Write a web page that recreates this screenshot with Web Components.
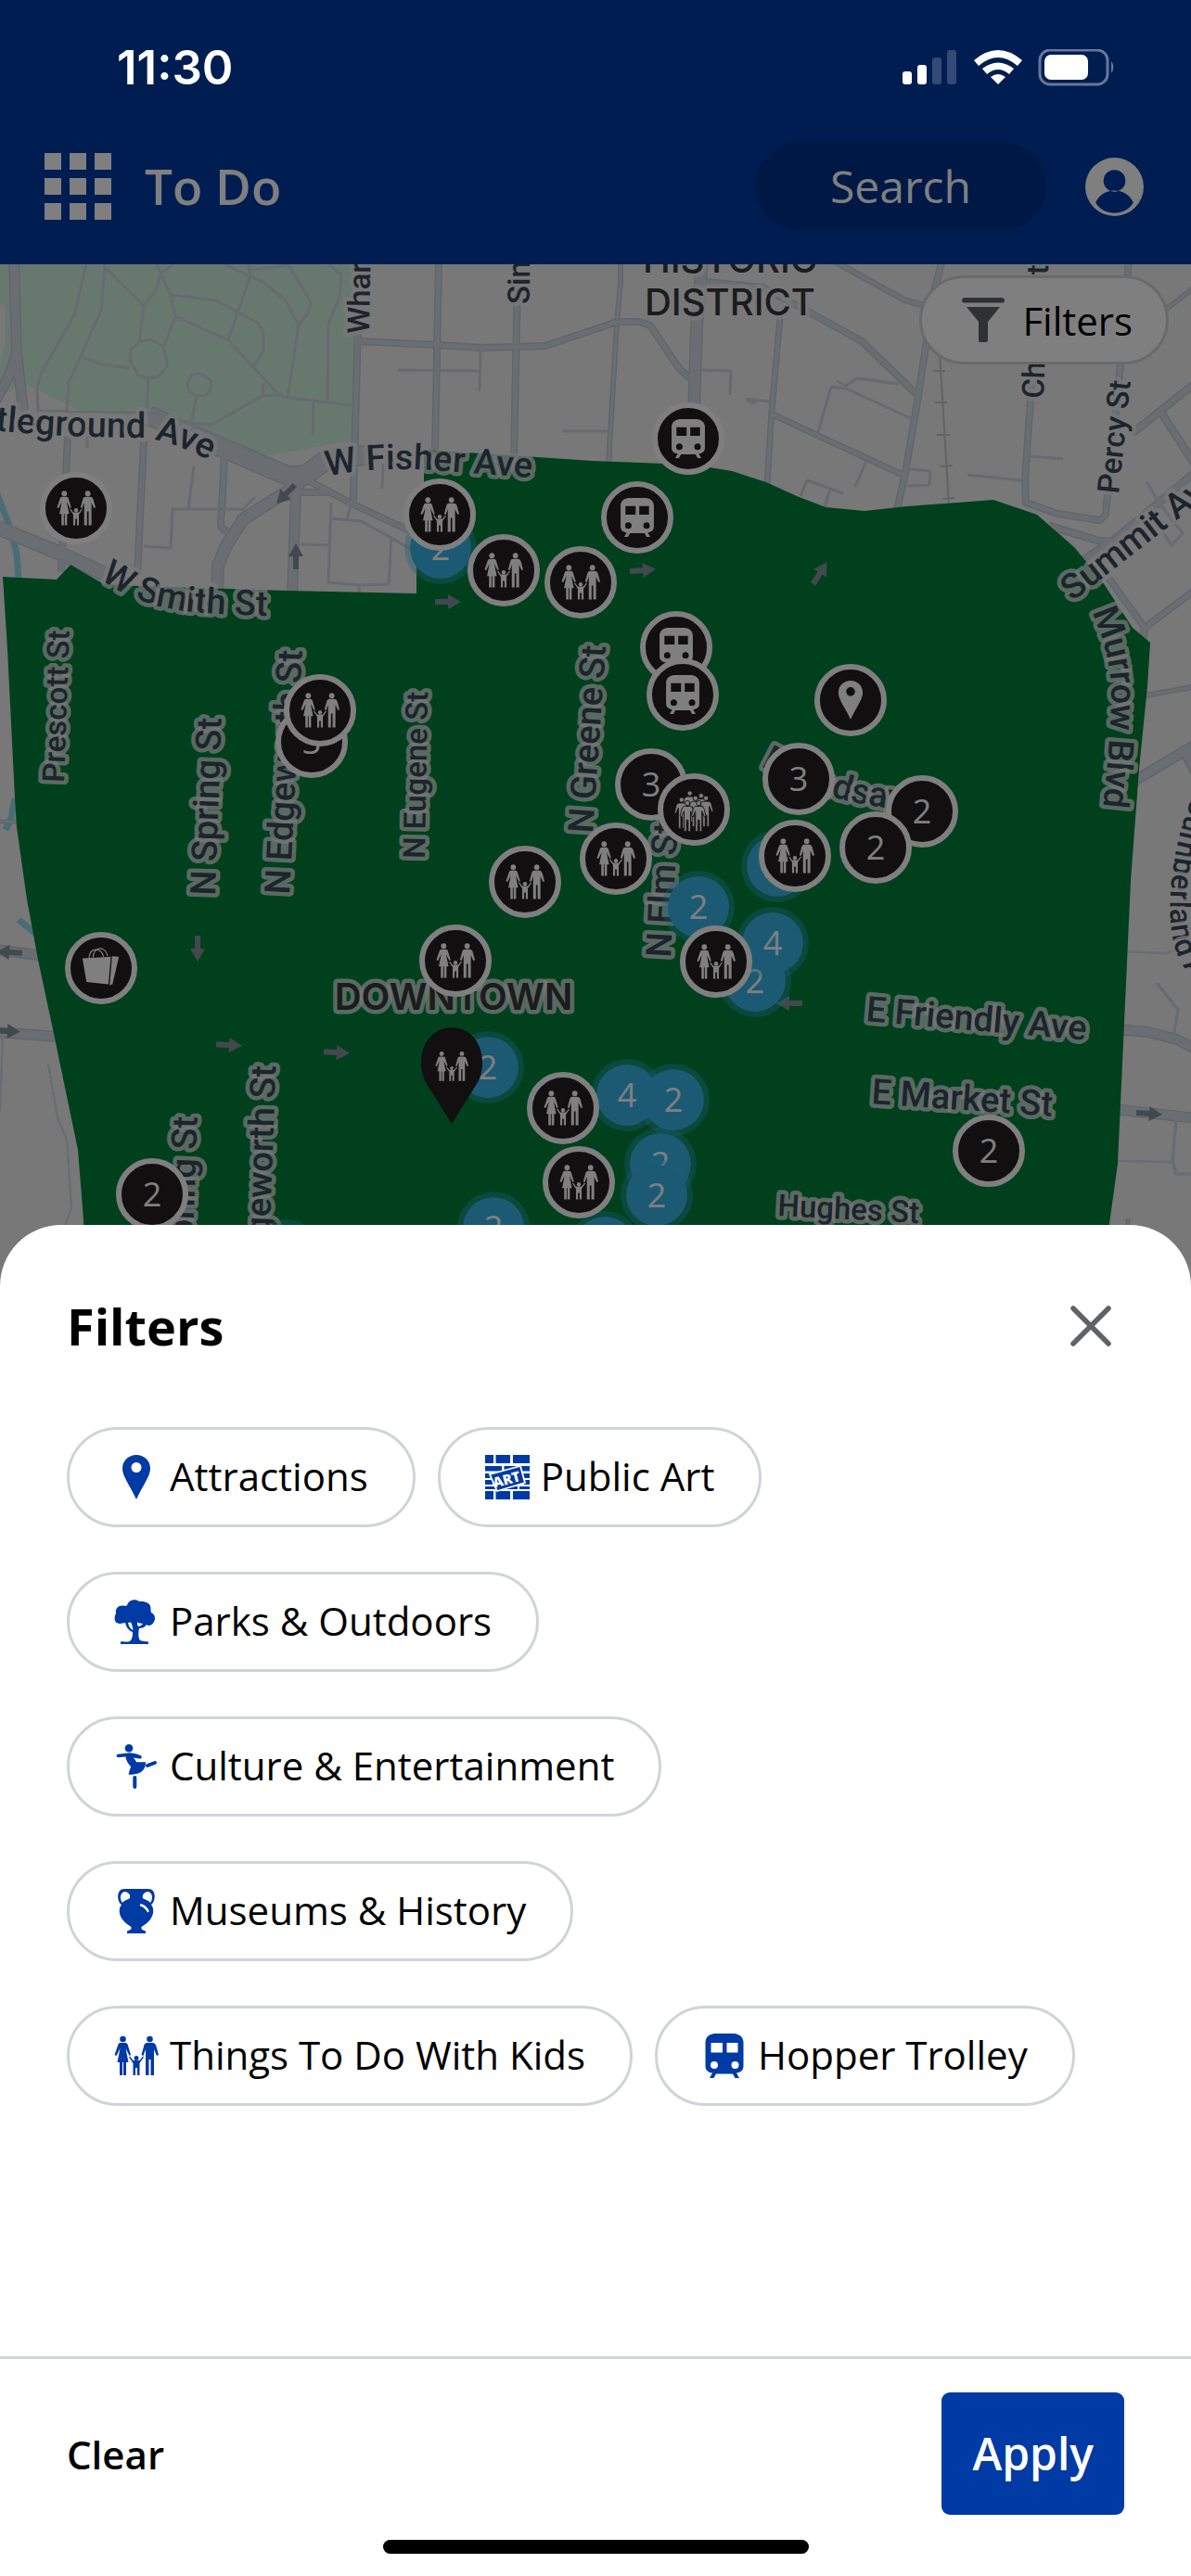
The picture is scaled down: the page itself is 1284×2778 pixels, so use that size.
<!DOCTYPE html>
<html lang="en">
<head>
<meta charset="utf-8">
<meta name="viewport" content="width=device-width, initial-scale=1">
<title>To Do</title>
<style>
    html, body { margin: 0; min-height: 100%; }
    body { font-family: "Open Sans", "Noto Sans", sans-serif; color: #000; background: #fff; }
</style>
</head>
<body>

<todo-app>
    <status-bar slot="status">11:30</status-bar>
    <app-bar slot="bar" heading="To Do">Search</app-bar>

    <city-map slot="map">
        <map-marker tone="blue" count="2" style="--x:475;--y:591"></map-marker>
        <map-marker tone="blue" style="--x:838;--y:934"></map-marker>
        <map-marker tone="blue" count="2" style="--x:753;--y:978"></map-marker>
        <map-marker tone="blue" count="2" style="--x:814;--y:1058"></map-marker>
        <map-marker tone="blue" count="4" style="--x:833;--y:1017"></map-marker>
        <map-marker tone="blue" count="2" style="--x:526;--y:1151"></map-marker>
        <map-marker tone="blue" count="4" style="--x:676;--y:1181"></map-marker>
        <map-marker tone="blue" count="2" style="--x:726;--y:1186"></map-marker>
        <map-marker tone="blue" count="2" style="--x:712;--y:1255"></map-marker>
        <map-marker tone="blue" style="--x:652;--y:1345"></map-marker>
        <map-marker tone="blue" count="2" style="--x:708;--y:1289"></map-marker>
        <map-marker tone="blue" count="2" style="--x:532;--y:1324"></map-marker>
        <map-marker tone="blue" style="--x:309;--y:1354"></map-marker>

        <map-marker icon="kids" style="--x:82;--y:548"></map-marker>
        <map-marker icon="kids" style="--x:474;--y:555"></map-marker>
        <map-marker icon="kids" style="--x:543;--y:615"></map-marker>
        <map-marker icon="kids" style="--x:626;--y:628"></map-marker>
        <map-marker icon="train" style="--x:742;--y:473"></map-marker>
        <map-marker icon="train" style="--x:687;--y:558"></map-marker>
        <map-marker icon="train" style="--x:729;--y:698"></map-marker>
        <map-marker icon="train" style="--x:736;--y:749"></map-marker>
        <map-marker icon="pin" style="--x:917;--y:755"></map-marker>
        <map-marker count="3" style="--x:336;--y:800"></map-marker>
        <map-marker icon="kids" style="--x:345;--y:766"></map-marker>
        <map-marker count="3" style="--x:702;--y:846"></map-marker>
        <map-marker icon="crowd" style="--x:748;--y:873"></map-marker>
        <map-marker count="3" style="--x:861;--y:840"></map-marker>
        <map-marker count="2" style="--x:994;--y:875"></map-marker>
        <map-marker count="2" style="--x:944;--y:914"></map-marker>
        <map-marker icon="kids" style="--x:857;--y:923"></map-marker>
        <map-marker icon="kids" style="--x:664;--y:926"></map-marker>
        <map-marker icon="kids" style="--x:566;--y:951"></map-marker>
        <map-marker icon="kids" style="--x:491;--y:1036"></map-marker>
        <map-marker icon="kids" style="--x:772;--y:1037"></map-marker>
        <map-marker icon="bag" style="--x:109;--y:1044"></map-marker>
        <map-marker icon="kids" style="--x:607;--y:1195"></map-marker>
        <map-marker icon="kids" style="--x:624;--y:1275"></map-marker>
        <map-marker count="2" style="--x:164;--y:1288"></map-marker>
        <map-marker count="2" style="--x:1066;--y:1241"></map-marker>
        <map-pin icon="kids" style="--x:487;--y:1212"></map-pin>

        <filter-chip slot="control" icon="funnel" compact>Filters</filter-chip>
    </city-map>

    <filter-sheet slot="sheet" heading="Filters">
        <filter-chip icon="pin">Attractions</filter-chip>
        <filter-chip icon="art">Public Art</filter-chip>
        <filter-chip icon="tree">Parks &amp; Outdoors</filter-chip>
        <filter-chip icon="dancer">Culture &amp; Entertainment</filter-chip>
        <filter-chip icon="vase">Museums &amp; History</filter-chip>
        <filter-chip icon="kids">Things To Do With Kids</filter-chip>
        <filter-chip icon="train">Hopper Trolley</filter-chip>
    </filter-sheet>
</todo-app>

<script>
// attach an open shadow root filled with the given markup
function render (element, html) {
    const template = document.createElement("template");
    template.innerHTML = html;
    element.attachShadow({ mode: "open" }).appendChild(template.content.cloneNode(true));
}

const person = (x, y) => `
    <g transform="translate(${x} ${y})">
        <circle cx="0" cy="3" r="3"/>
        <path d="M-3 7H3C5 7 6 8 6.600 10L9 19L7 20L4 13V38H1V24H-1V38H-4V13L-7 20L-9 19L-6.600 10C-6 8-5 7-3 7Z"/>
    </g>`;

const icons = {
    pin: `<path fill-rule="evenodd" d="M24 0C15.500 0 9 6.500 9 14.500C9 23 16 31 24 48C32 31 39 23 39 14.500C39 6.500 32.500 0 24 0ZM24 8A5.500 5.500 0 1 1 24 19A5.500 5.500 0 1 1 24 8Z"/>`,
    art: `
        <path d="M0 0H9V9H0ZM11.500 0H27V9H11.500ZM30 0H48V9H30ZM0 12H18V17.500H0ZM20.500 12H33V17.500H20.500ZM36 12H48V17.500H36ZM0 20H9V25H0ZM40 20H48V25H40ZM0 27H8V32H0ZM42 27H48V32H42ZM0 34H18V37H0ZM20 34H35V37H20ZM37 34H48V37H37ZM0 39H9V48H0ZM11.500 39H27V48H11.500ZM30 39H48V48H30Z"/>
        <path d="M5 21L38 12L43 30L13 39Z" stroke="#fff" stroke-width="1.800"/>
        <text x="10" y="35.500" transform="rotate(-15 10 35.500)" font-family="Open Sans, sans-serif" font-weight="800" font-size="15" style="fill:#fff">ART</text>`,
    tree: `<path fill-rule="evenodd" d="M20 0.500C24-0.500 26 1 27 2C32 1.500 38 3 39 7C40 9 39 12 40 14C44 16 45 20 43 24C41 28 37 29 35 27C33 30 30 31 27 31C26 36 26 42 28 44C30 45 35 45 37 45.500V48H7V45.500C10 44.500 12 46 15 45.500C19 45 20 41 20 35C15 33 13 29 12 25C8 26 3 27 1 23C0 19 1 17 2 15C1 9 5 6 10 6.500C12 7 13 7 14 6C15 3 17 1 20 0.500ZM15 25C15.500 29 18 32 20.500 33C20 29 19 26 18 24.500ZM25 25C25 27 25.500 28 26 29C28 29 30 27.500 31 26C29 26 27 25 25 24.500Z"/>`,
    dancer: `
        <circle cx="16" cy="4.300" r="4.300"/>
        <path d="M4 10.800L17 9.300Q24 10 29 12.300Q31 14.500 28 15.700L21 14.500Q23 17 24 19.200L34 19.300C34.500 27 29 34 15.500 32.500L18 24Q13 19 12.500 13.500L4 14.300Q1 12.500 4 10.800Z"/>
        <path d="M36 23L44 20M22.300 36V46" fill="none" stroke="currentColor" stroke-width="4" stroke-linecap="round"/>`,
    vase: `
        <path fill-rule="evenodd" d="M11 0H37C46 0 45 14 40 17C44 22 42 29 39 33C35 38 31 40 29.500 41V43C30 44.500 34 45 34 46V48H14V46C14 45 18 44.500 18.500 43V41C17 40 13 38 9 33C6 29 4 22 8 17C3 14 2 0 11 0ZM11 3C5.500 5 6.500 12 9 15C11 12 14 12 17 10C18 6 15 3 11 3ZM37 3C33 3 30 6 31 10C34 12 37 12 39 15C41.500 12 42.500 5 37 3Z"/>
        <path d="M29 17.500Q34 19 36.500 24" fill="none" stroke="#fff" stroke-width="2.500" stroke-linecap="round"/>`,
    kids: `
        <circle cx="9.500" cy="6" r="3.300"/>
        <path d="M7 10H12C14 10 14.500 11 15 13L18 23L16.500 24L12.500 16L15.500 31H13V45H10V31H9V45H6V31H3.500L6.500 16L2.500 24L0.500 23L4 13C4.500 11 5 10 7 10Z"/>
        <circle cx="38.500" cy="6" r="3.300"/>
        <path d="M36 10H41C44 10 45 12 45.500 14L48 23L46 24L43 17V45H39.500V28H37.500V45H34V17L31.500 24L29.500 23L32 14C32.500 12 33 10 36 10Z"/>
        <circle cx="24" cy="26.500" r="2.500"/>
        <path d="M17 24.500L20.500 29H27.500L31 24.500L32 25.500L27.500 32V45H25V37H23V45H20.500V32L16 25.500Z"/>`,
    train: `<path fill-rule="evenodd" d="M13 0H35C41 1 44 4 44.500 9V35C44.500 40 41 42 37 42.500L40 48H35.500L33 43.500H15L12.500 48H8L11 42.500C7 42 3.500 40 3.500 35V9C4 4 7 1 13 0ZM9.500 10V20.500H22V10ZM26.500 10V20.500H38.500V10ZM13 30A4 4 0 1 0 13 38A4 4 0 1 0 13 30ZM35.500 30A4 4 0 1 0 35.500 38A4 4 0 1 0 35.500 30Z"/>`,
    crowd: `<g stroke="#231f20" stroke-width="1">${person(19, 1)}${person(33, 4)}${person(9, 9)}${person(39, 7)}${person(26, 7)}${person(16, 13)}${person(30, 13)}</g>`,
    bag: `
        <path d="M1 12L36 10L33 44L6 41Z"/>
        <path d="M37.500 9.500L46 10L38 44L34.500 45Z"/>
        <path d="M9 12C10-2 24-2 27 10M14 11C15-3 29-4 32 9" fill="none" stroke="currentColor" stroke-width="1.500"/>`,
    funnel: `<path d="M3.500 0H44.500Q47 0.500 47 3Q47 5.500 44.500 5.500H3.500Q1 5.500 1 3Q1 0.500 3.500 0ZM6 10H42L29 26V46Q29 48 27 48H21Q19 48 19 46V26Z"/>`,
    close: `<path d="M5 5L43 43M43 5L5 43" fill="none" stroke="currentColor" stroke-width="5.500" stroke-linecap="round"/>`,
    grid: `<path d="M0 0H12V12H0ZM18 0H30V12H18ZM36 0H48V12H36ZM0 18H12V30H0ZM18 18H30V30H18ZM36 18H48V30H36ZM0 36H12V48H0ZM18 36H30V48H18ZM36 36H48V48H36Z"/>`,
    account: `<path fill-rule="evenodd" d="M24 0A24 24 0 1 1 24 48A24 24 0 1 1 24 0ZM24 10A9 9 0 1 0 24 28A9 9 0 1 0 24 10ZM8.500 37C12 43 18 45.500 24 45.500C30 45.500 36 43 39.500 37C37 31 31 27 24 27C17 27 11 31 8.500 37Z"/>`
};

class UiIcon extends HTMLElement {

    connectedCallback() {
        render(this, `
<style>
    :host { display: inline-block; flex: none; width: 48px; height: 48px; }
    svg { display: block; width: 100%; height: 100%; fill: currentColor; overflow: visible; }
</style>
<svg viewBox="0 0 48 48" aria-hidden="true">${icons[this.getAttribute("name")]}</svg>`);
    }
}
customElements.define("ui-icon", UiIcon);

class StatusBar extends HTMLElement {

    connectedCallback() {
        render(this, `
<style>
    :host {
        display: flex; align-items: center; justify-content: space-between;
        height: 146px; padding: 0 81px 0 126px; box-sizing: border-box;
        color: #fff; font: 600 51px/60px Inter, "Liberation Sans", sans-serif;
    }
    svg { display: block; }
</style>
<slot></slot>
<svg width="230" height="40" viewBox="0 0 230 40" fill="#fff" aria-hidden="true">
    <rect x="0" y="24" width="10" height="14" rx="3"/>
    <rect x="16" y="17" width="10" height="21" rx="3"/>
    <g opacity=".2"><rect x="32" y="9" width="10" height="29" rx="3"/><rect x="48" y="1" width="10" height="37" rx="3"/></g>
    <path d="M77 12Q103-10 129 12L124 18Q103 0 82 18ZM86 21Q103 8 120 21L115 27Q103 17 91 27ZM95 30Q103 24 111 30L103 38Z"/>
    <rect x="148" y="1" width="73" height="37" rx="11" fill="none" stroke="#fff" stroke-width="3" opacity=".4"/>
    <rect x="153" y="6" width="47" height="27" rx="7"/>
    <path d="M225 13Q230 19 225 26Z" opacity=".4"/>
</svg>`);
    }
}
customElements.define("status-bar", StatusBar);

class AppBar extends HTMLElement {

    connectedCallback() {
        render(this, `
<style>
    :host { display: block; color: #fff; }
    header { display: flex; align-items: center; padding: 7px 51px 36px 48px; }
    button { border: 0; padding: 0; background: none; color: inherit; font: inherit; }
    .menu { display: flex; }
    .menu ui-icon { width: 72px; height: 72px; }
    h1 { flex: 1; margin: 0 0 0 36px; font-size: 53px; line-height: 72px; font-weight: 600; }
    .search { height: 96px; padding: 0 81px; border-radius: 48px; background: #00318c; font-size: 48px; line-height: 66px; }
    .account { display: flex; margin-left: 42px; }
    .account ui-icon { width: 63px; height: 63px; }
</style>
<header>
    <button class="menu" aria-label="Menu"><ui-icon name="grid"></ui-icon></button>
    <h1>${this.getAttribute("heading")}</h1>
    <button class="search"><slot></slot></button>
    <button class="account" aria-label="Account"><ui-icon name="account"></ui-icon></button>
</header>`);
    }
}
customElements.define("app-bar", AppBar);

// stroke width, line
const roads = [
    [12, "M15 280L18 380L25 443M18 380L10 405L-5 432"],
    [8, "M73 470L66 617M155 476L148 620M242 490L238 567Q240 572 246 573"],
    [16, "M-5 568L68 598L140 632"],
    [22, "M160 448L240 483L310 513L328 513L352 496L400 490"],
    [10, "M240 487L280 500L322 528"],
    [14, "M325 520L262 560L243 590L235 610L234 640"],
    [12, "M319 530L315 640"],
    [8, "M332 518L379 543L445 574M322 531H354"],
    [8, "M386 350L381 540M473 280L469 486"],
    [8, "M558 300L554 492M387 368L471 372L518 375L588 373L642 355L665 347H689L701 351L732 397L744 408"],
    [6, "M669 280V305L665 348L656 500"],
    [14, "M757 280L751 353L748 445"],
    [8, "M761 304L822 310L875 338L929 368L990 427"],
    [7, "M900 282L974 323L994 329"],
    [8, "M1016 280L1008 310L996 387L990 427L976 510L967 550"],
    [7, "M841 342L832 443L827 522M833 447L975 513"],
    [8, "M1124 285L1111 430L1105 518L1106 542L1140 554L1186 561L1192 555L1194 533L1208 393L1217 280"],
    [6, "M1290 308L1258 333"],
    [9, "M1290 412L1221 467M1252 445L1290 504M1131 567L1187 584H1199L1290 508M1168 604L1199 583"],
    [8, "M1195 623L1234 677L1232 695M1234 677L1290 635"],
    [6, "M1230 751L1290 740"],
    [12, "M1220 844L1277 810L1290 802M1278 811L1290 835"],
    [12, "M1205 1110L1238 1113L1269 1121L1290 1132M1200 1196L1290 1206"],
    [12, "M-5 1024L48 1031M-5 1113L64 1118"],
    [5, "M-5 886H22M1216 1314V1400"],
    [2, "M52 1147L62 1206L72 1229L77 1303L60 1350M3 1117L0 1200M1210 1026L1256 1028L1290 1016M1200 1252L1264 1253"],
    [3, "M1247 1060L1270 1089L1265 1118M1268 1208L1264 1252L1268 1266H1290M1236 520L1250 543L1275 575L1263 588L1254 574"]
];

const paths = `
    M429 399L518 400M518 377L517 422M606 465H656M413 500L412 527M357 542L354 628L387 631L419 630L422 580L389 562L356 559
    M387 631V640M422 580L442 592M324 587L354 588M209 503L203 549M155 589L184 591L186 549H262L275 536M262 550L266 558M379 543L374 559M94 470V483
    M93 285L80 340L43 405L40 420L41 443L164 445L205 456L228 458L283 427L301 426
    M113 285L109 335L74 413L72 443M113 288L155 330L150 369M155 330L169 312L173 296L186 285
    M169 285L184 318L189 341L177 373M184 318L233 324L278 348L284 358V379L272 397M189 341L246 367L301 426L311 429L381 437
    M242 285L283 304L308 324L322 351L310 429M268 285L270 297L246 367M270 291L311 286L335 325L333 336L322 351
    M354 285L368 296L366 320L354 349L353 434M160 408L158 443M212 427L206 456M88 385L110 393L140 397M338 434L337 469M284 413L283 427
    M150 369L162 366L176 373L181 394L171 406L160 408L149 405L140 388L141 377ZM207 404L215 402L227 410V420L222 426L212 427L204 422L202 413Z
    M756 399L788 400L787 426M804 430L830 433M804 430L811 435L817 431M896 417L882 466M896 417L912 419L986 453M902 411L912 416L924 408L969 414
    M934 497L922 525M981 506L1003 508L1002 523L978 524M863 535L870 518L909 532M895 527L889 547M1110 492L1146 495M1043 512L1101 518`;

// centre x, centre y, heading in degrees
const arrows = [
    [308, 533, 135], [319, 600, -90], [483, 649, 0], [693, 615, -5], [884, 618, -58], [213, 1023, 90],
    [247, 1127, 3], [363, 1135, 3], [10, 1027, 183], [8, 1112, 3], [851, 1082, 180], [1239, 1201, 4]
];

// text, font size, baseline x, baseline y, rotation
const labels = [
    ["Wharton St", 33, 398, 360, -89], ["Simpson St", 33, 571, 328, -90],
    ["Church St", 33, 1125, 430, -88], ["Percy St", 33, 1206, 533, -84],
    ["Prescott St", 33, 69, 844, -88], ["N Spring St", 38, 232, 966, -88],
    ["N Edgeworth St", 38, 312, 965, -87], ["N Eugene St", 33, 458, 926, -89],
    ["N Greene St", 38, 639, 899, -86], ["N Elm St", 38, 723, 1033, -87],
    ["N Spring St", 38, 206, 1396, -88], ["N Edgeworth St", 38, 288, 1413, -88],
    ["E Friendly Ave", 38, 933, 1101, 5], ["E Market St", 38, 939, 1190, 4],
    ["Hughes St", 33, 838, 1311, 3], ["Summit Ave", 38, 1156, 649, -38]
];

// text, font size, baseline curve
const curvedLabels = [
    ["Battleground Ave", 38, "M-62 458C0 466 80 472 150 472C180 474 205 486 250 508"],
    ["W Fisher Ave", 38, "M353 514Q400 502 480 508T610 518"],
    ["W Smith St", 38, "M108 624Q150 655 210 660T330 664"],
    ["Murrow Blvd", 38, "M1177 660Q1198 705 1198 750T1186 900"],
    ["Cumberland Ave", 33, "M1286 858C1268 900 1254 970 1266 1020C1272 1040 1284 1056 1320 1095"],
    ["E Lindsay St", 38, "M820 826Q860 848 900 860T1040 880"]
];

class CityMap extends HTMLElement {

    connectedCallback() {
        const casing = roads.map(([w, d]) => `<path d="${d}" stroke-width="${w}"/>`).join("");
        const filling = roads.map(([w, d]) => `<path d="${d}" stroke-width="${Math.max(w - 3, 2)}"/>`).join("");
        render(this, `
<style>
    :host { display: block; position: relative; overflow: hidden; background: #f1f1f1; }
    /* free canvas, kept centred in the window like the map view itself */
    .canvas { position: absolute; left: 50%; top: -285px; width: 1284px; margin-left: -642px; }
    svg { display: block; overflow: visible; }
    .line { fill: none; stroke-linejoin: round; }
    text {
        font-family: Roboto, "Liberation Sans", sans-serif; font-weight: 500; fill: #394859;
        stroke: #f1f1f1; stroke-opacity: .75; stroke-width: 9px; stroke-linejoin: round; paint-order: stroke;
    }
    .place { font: 500 40px Inter, "Liberation Sans", sans-serif; fill: #36383b; text-anchor: middle; }
    .control { position: absolute; top: 12px; right: 24px; }
</style>
<div class="canvas">
    <svg width="1284" height="1440" viewBox="0 0 1284 1440">
        <path fill="#cff0dd" d="M0 285H385L381 475L283 492L235 480L164 450L86 443L25 413L0 428V395L6 365V330L0 327Z"/>
        <path class="line" stroke="#92dbee" stroke-width="7" d="M-4 530L10 567L18 597L20 625M16 861L12 882L6 895M20 992L44 1011"/>
        <g class="line" stroke="#c2ccd5">${casing}</g>
        <g class="line" stroke="#d4dde6">${filling}</g>
        <path class="line" stroke="#d0d5de" stroke-width="3" d="${paths}"/>
        <path class="line" stroke="#c6c6c8" stroke-width="2" d="M1013 380L1023 545M1006 400H1019M1008 434H1021M1010 469H1024M1013 503L1027 502M1016 538L1030 537"/>
        <path fill="#00803a" d="M3 622L61 625L76 609L112 630L150 632L311 637L449 640V590L457 560V485L639 497L716 500L765 504L789 508L826 520L859 535L890 547L932 551L978 546L1071 539L1118 555L1158 590L1187 625L1221 677L1240 693L1237 740L1228 830L1219 950L1211 1125L1205 1255L1196 1320L1190 1440H92L90 1315L84 1240L57 1110L41 1035L29 970L18 892L16 860L8 700Z"/>
        <g fill="#87919d">${arrows.map(([x, y, r]) => `<path transform="translate(${x} ${y}) rotate(${r})" d="M-14-3H0V-8L14 0L0 8V3H-14Z"/>`).join("")}</g>
        ${labels.map(([t, s, x, y, r]) => `<text font-size="${s}" transform="translate(${x} ${y}) rotate(${r})">${t}</text>`).join("")}
        ${curvedLabels.map(([t, s, d], i) => `<path id="curve${i}" fill="none" d="${d}"/><text font-size="${s}"><textPath href="#curve${i}">${t}</textPath></text>`).join("")}
        <text class="place" x="787" y="294">HISTORIC</text>
        <text class="place" x="787" y="340">DISTRICT</text>
        <text class="place" x="489" y="1089" style="font-weight:600">DOWNTOWN</text>
    </svg>
    <slot></slot>
</div>
<div class="control"><slot name="control"></slot></div>`);
    }
}
customElements.define("city-map", CityMap);

class MapMarker extends HTMLElement {

    connectedCallback() {
        const icon = this.getAttribute("icon");
        render(this, `
<style>
    :host {
        position: absolute; left: calc(var(--x) * 1px); top: calc(var(--y) * 1px);
        width: 78px; height: 78px; margin: -39px 0 0 -39px;
    }
    button {
        display: flex; align-items: center; justify-content: center;
        width: 100%; height: 100%; padding: 0; box-sizing: border-box;
        border: 6px solid #fff; border-radius: 50%;
        background: #231f20; color: #fff; font: 500 36px/48px "Open Sans", sans-serif;
    }
    :host([tone="blue"]) button { border-color: rgba(56, 186, 240, .35); background: #38b5e8; background-clip: padding-box; }
    ui-icon { width: 42px; height: 42px; }
</style>
<button aria-label="${icon || "places"}">${icon ? `<ui-icon name="${icon}"></ui-icon>` : this.getAttribute("count") || ""}</button>`);
    }
}
customElements.define("map-marker", MapMarker);

class MapPin extends HTMLElement {

    connectedCallback() {
        render(this, `
<style>
    :host {
        position: absolute; left: calc(var(--x) * 1px); top: calc(var(--y) * 1px);
        width: 66px; height: 104px; margin: -104px 0 0 -33px; color: #fff;
    }
    svg { position: absolute; inset: 0; }
    button { position: relative; display: flex; justify-content: center; width: 100%; height: 100%; padding: 24px 0 0; border: 0; background: none; color: inherit; }
    ui-icon { width: 36px; height: 36px; }
</style>
<svg width="66" height="104" viewBox="0 0 66 104" aria-hidden="true"><path fill="#231f20" d="M33 0C14 0 0 16 0 38C0 48 3 57 8 64L33 104L58 64C63 57 66 48 66 38C66 16 52 0 33 0Z"/></svg>
<button aria-label="selected place"><ui-icon name="${this.getAttribute("icon")}"></ui-icon></button>`);
    }
}
customElements.define("map-pin", MapPin);

class FilterChip extends HTMLElement {

    connectedCallback() {
        render(this, `
<style>
    :host { display: block; }
    button {
        display: flex; align-items: center; gap: 12px;
        height: 108px; padding: 0 48px; box-sizing: border-box;
        border: 3px solid #d0d4d9; border-radius: 54px;
        background: #fff; color: #000; font: inherit; font-size: 42px; line-height: 57px; white-space: nowrap;
    }
    span { padding-bottom: 3px; }
    ui-icon { color: #003aa4; }
    :host([compact]) button { height: 96px; padding: 0 36px 0 42px; gap: 18px; }
    :host([compact]) span { padding-bottom: 0; }
    :host([compact]) ui-icon { color: #5f6368; }
</style>
<button><ui-icon name="${this.getAttribute("icon")}"></ui-icon><span><slot></slot></span></button>`);
    }
}
customElements.define("filter-chip", FilterChip);

class FilterSheet extends HTMLElement {

    connectedCallback() {
        render(this, `
<style>
    :host { display: block; border-radius: 66px 66px 0 0; background: #fff; overflow: hidden; }
    .head { display: flex; align-items: center; justify-content: space-between; padding: 73px 84px 0 72px; }
    h2 { margin: 0; font-size: 54px; line-height: 72px; font-weight: 700; }
    button { border: 0; font: inherit; font-weight: 600; }
    .close { display: flex; padding: 0; background: none; color: #5f6368; }
    .chips { display: flex; flex-wrap: wrap; gap: 48px 24px; padding: 73px 72px 270px; }
    footer { display: flex; align-items: center; justify-content: space-between; padding: 36px 72px 27px; border-top: 3px solid #d0d4d7; }
    .clear { padding: 0; background: none; color: #000; font-size: 42px; line-height: 57px; }
    .apply { height: 132px; padding: 0 33px; border-radius: 9px; background: #003aa4; color: #fff; font-size: 48px; line-height: 66px; }
    .home { width: 459px; height: 15px; margin: 0 auto 24px; border-radius: 8px; background: #000; }
</style>
<div class="head">
    <h2>${this.getAttribute("heading")}</h2>
    <button class="close" aria-label="Close"><ui-icon name="close"></ui-icon></button>
</div>
<div class="chips"><slot></slot></div>
<footer>
    <button class="clear">Clear</button>
    <button class="apply">Apply</button>
</footer>
<div class="home"></div>`);
    }
}
customElements.define("filter-sheet", FilterSheet);

class TodoApp extends HTMLElement {

    connectedCallback() {
        render(this, `
<style>
    :host { display: flex; flex-direction: column; position: relative; min-height: 100vh; background: #003aa4; }
    .backdrop { position: absolute; inset: 0; z-index: 1; background: rgba(0, 0, 0, .5); }
    ::slotted(status-bar) { position: relative; z-index: 2; }
    ::slotted(city-map) { flex: 1; min-height: 480px; }
    ::slotted(filter-sheet) { position: relative; z-index: 2; margin-top: -96px; }
</style>
<slot name="status"></slot>
<slot name="bar"></slot>
<slot name="map"></slot>
<div class="backdrop"></div>
<slot name="sheet"></slot>`);
    }
}
customElements.define("todo-app", TodoApp);
</script>
</body>
</html>
